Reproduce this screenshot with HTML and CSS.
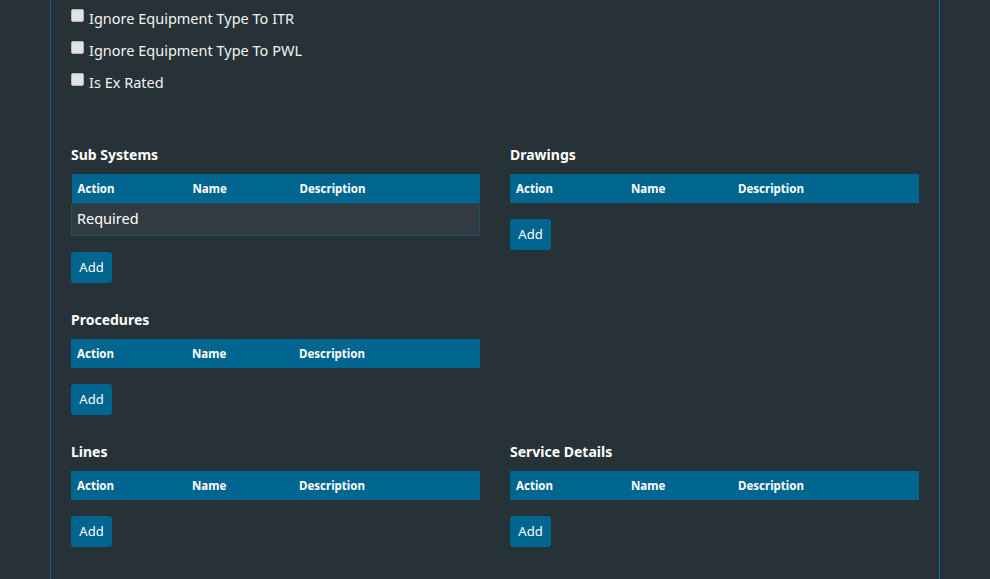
FILE: index.html
```html
<!DOCTYPE html>
<html>
<head>
<meta charset="utf-8">
<link rel="stylesheet" href="styles.css">
</head>
<body>
<div class="page">
  <div class="checks">
    <label class="check"><input type="checkbox"><span>Ignore Equipment Type To ITR</span></label>
    <label class="check"><input type="checkbox"><span>Ignore Equipment Type To PWL</span></label>
    <label class="check"><input type="checkbox"><span>Is Ex Rated</span></label>
  </div>
  <div class="grid">
    <section class="sec">
      <h4>Sub Systems</h4>
      <table class="tbl">
        <thead><tr><th class="c1">Action</th><th class="c2">Name</th><th>Description</th></tr></thead>
        <tbody><tr><td colspan="3">Required</td></tr></tbody>
      </table>
      <button class="btn">Add</button>
    </section>
    <section class="sec">
      <h4>Drawings</h4>
      <table class="tbl">
        <thead><tr><th class="c1">Action</th><th class="c2">Name</th><th>Description</th></tr></thead>
      </table>
      <button class="btn">Add</button>
    </section>
    <section class="sec">
      <h4>Procedures</h4>
      <table class="tbl">
        <thead><tr><th class="c1">Action</th><th class="c2">Name</th><th>Description</th></tr></thead>
      </table>
      <button class="btn">Add</button>
    </section>
    <div></div>
    <section class="sec">
      <h4>Lines</h4>
      <table class="tbl">
        <thead><tr><th class="c1">Action</th><th class="c2">Name</th><th>Description</th></tr></thead>
      </table>
      <button class="btn">Add</button>
    </section>
    <section class="sec">
      <h4>Service Details</h4>
      <table class="tbl">
        <thead><tr><th class="c1">Action</th><th class="c2">Name</th><th>Description</th></tr></thead>
      </table>
      <button class="btn">Add</button>
    </section>
  </div>
</div>
</body>
</html>
```

FILE: styles.css
```css
html, body {
  margin: 0;
  padding: 0;
  background: #263238;
  height: 100%;
  overflow: hidden;
}
body {
  font-family: "Noto Sans", "Open Sans", sans-serif;
  color: #ffffff;
}
.page {
  margin-left: 50px;
  width: 848px;
  min-height: 100%;
  padding: 2px 20px 0 20px;
  border-left: 1px solid #0a6a94;
  border-right: 1px solid #0a6a94;
  box-sizing: content-box;
}
.checks {
  display: flex;
  flex-direction: column;
}
.check {
  display: flex;
  align-items: center;
  height: 32px;
  font-size: 14.5px;
  color: #f2f2f2;
}
.check input {
  appearance: none;
  -webkit-appearance: none;
  width: 13px;
  height: 13px;
  margin: -6px 5px 0 0;
  background: #e3e3e3;
  border: 1px solid #b5b5b5;
  border-radius: 2px;
  box-sizing: border-box;
}
.grid {
  margin-top: 47px;
  display: grid;
  grid-template-columns: 409px 409px;
  column-gap: 30px;
  align-items: start;
}
.sec {
  margin-bottom: 27px;
}
.sec h4 {
  margin: 0 0 9px 0;
  font-size: 14px;
  line-height: 20px;
  font-weight: 700;
}
.tbl {
  width: 100%;
  border-collapse: collapse;
  font-size: 11.5px;
}
.tbl th {
  background: #00668f;
  height: 29px;
  padding: 0 6px;
  text-align: left;
  font-weight: 700;
}
.tbl th.c1 { width: 103px; }
.tbl th.c2 { width: 95px; }
.tbl td {
  background: #323b42;
  border: 1px solid #1b506a;
  height: 32px;
  padding: 0 5px 3px 5px;
  box-sizing: border-box;
  font-size: 14.5px;
}
.btn {
  display: block;
  margin-top: 16px;
  height: 31px;
  width: 41px;
  padding: 0 0 1px 0;
  background: #00668f;
  color: #ffffff;
  border: none;
  border-radius: 3px;
  font-family: inherit;
  font-size: 13px;
}
```
